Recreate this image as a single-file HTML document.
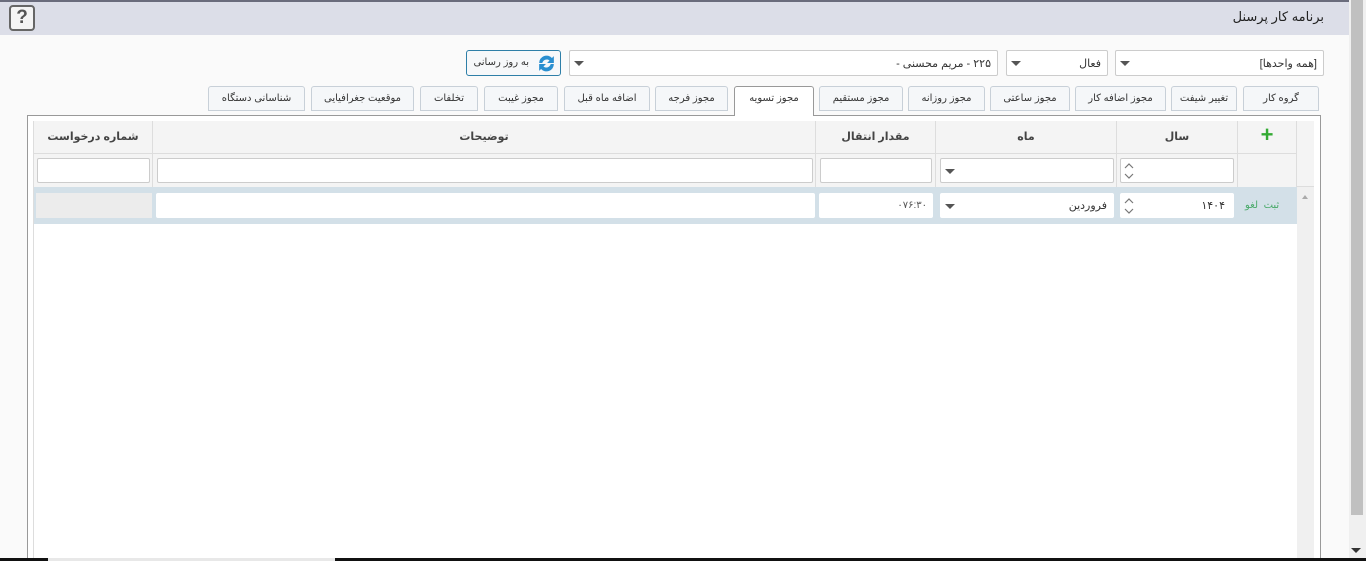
<!DOCTYPE html>
<html><head><meta charset="utf-8"><style>
*{box-sizing:border-box;margin:0;padding:0}
body{width:1366px;height:561px;overflow:hidden;background:#fafafa;font-family:"Liberation Sans","DejaVu Sans",sans-serif;font-size:11px;color:#333;position:relative}
.a{position:absolute}
.hdr{left:0;top:0;width:1349px;height:35px;background:#dcdee8;border-top:2px solid #6a6c7c}
.help{left:9px;top:5px;width:26px;height:26px;border:2px solid #666;border-radius:4px;background:#f4f4f4;font-weight:bold;font-size:19px;text-align:center;line-height:21px;color:#555}
.title{right:42px;top:9px;font-size:13px;color:#222;direction:rtl}
.sb{left:1349px;top:0;width:17px;height:561px;background:#f0f0f0}
.thumb{left:1351px;top:0;width:12px;height:515px;background:#c0c0c0}
.dd{height:26px;border:1px solid #ccc;background:#fff;border-radius:2px;direction:rtl;padding:6px 6px;font-size:11px}
.tri{position:absolute;width:0;height:0;border-left:5px solid transparent;border-right:5px solid transparent;border-top:5px solid #555}
.btn{left:466px;top:50px;width:95px;height:26px;border:1px solid #2e7fa8;border-radius:3px;background:#f6f8fa}
.tab{top:86px;height:25px;border:1px solid #c8d0d8;border-radius:3px 3px 0 0;background:#f5f7f9;font-size:10px;text-align:center;line-height:23px;color:#333;direction:rtl}
.tab.on{background:#fff;border-color:#999;border-bottom:none;height:30px;z-index:2}
.panel{left:27px;top:115px;width:1294px;height:446px;border:1px solid #999;background:#fff}
.grid{left:33px;top:121px;width:1281px;height:440px;border:1px solid #ddd;background:#fff}
.th{top:121px;height:33px;background:#f4f4f4;border-right:1px solid #ddd;border-bottom:1px solid #ddd;font-weight:bold;font-size:11px;text-align:center;line-height:32px;direction:rtl;color:#444}
.fr{top:154px;height:33px;background:#f4f4f4;border-right:1px solid #ddd}
.inp{position:absolute;top:4px;height:25px;background:#fff;border:1px solid #ccc;border-radius:2px}
.row{left:34px;top:187px;width:1263px;height:37px;background:#d3e0e8}
.spin{position:absolute;left:3px;top:3px}
</style></head><body>
<div class="a hdr"></div>
<div class="a help">?</div>
<div class="a title">برنامه کار پرسنل</div>
<div class="a sb"></div><div class="a thumb"></div>
<div class="a" style="left:1351px;top:548px;width:0;height:0;border-left:5px solid transparent;border-right:5px solid transparent;border-top:5px solid #333"></div>

<div class="a dd" style="left:1115px;top:50px;width:209px">[همه واحدها]<span class="tri" style="left:4px;top:10px"></span></div>
<div class="a dd" style="left:1006px;top:50px;width:102px">فعال<span class="tri" style="left:4px;top:10px"></span></div>
<div class="a dd" style="left:569px;top:50px;width:429px">۲۲۵ - مریم محسنی -<span class="tri" style="left:4px;top:10px"></span></div>
<div class="a btn">
<svg class="a" style="left:69px;top:2px" width="21" height="21" viewBox="0 0 20 20"><path d="M3 9.5a7 7 0 0 1 12.2-4.7L17 3v6.5h-6.5l2.4-2.4A4.3 4.3 0 0 0 6 9.5z" fill="#2a8fd0"/><path d="M17 10.5a7 7 0 0 1-12.2 4.7L3 17v-6.5h6.5l-2.4 2.4A4.3 4.3 0 0 0 14 10.5z" fill="#2a8fd0"/></svg>
<span class="a" style="right:31px;top:6px;font-size:10px;direction:rtl">به روز رسانی</span></div>

<div class="a tab" style="left:1243px;width:76px">گروه کار</div>
<div class="a tab" style="left:1171px;width:66px">تغییر شیفت</div>
<div class="a tab" style="left:1075px;width:91px">مجوز اضافه کار</div>
<div class="a tab" style="left:990px;width:80px">مجوز ساعتی</div>
<div class="a tab" style="left:908px;width:77px">مجوز روزانه</div>
<div class="a tab" style="left:819px;width:84px">مجوز مستقیم</div>
<div class="a tab on" style="left:734px;width:80px">مجوز تسویه</div>
<div class="a tab" style="left:655px;width:73px">مجوز فرجه</div>
<div class="a tab" style="left:564px;width:86px">اضافه ماه قبل</div>
<div class="a tab" style="left:484px;width:74px">مجوز غیبت</div>
<div class="a tab" style="left:420px;width:58px">تخلفات</div>
<div class="a tab" style="left:311px;width:103px">موقعیت جغرافیایی</div>
<div class="a tab" style="left:208px;width:97px">شناسانی دستگاه</div>

<div class="a panel"></div>
<div class="a grid"></div>
<div class="a" style="left:1297px;top:187px;width:17px;height:374px;background:#f0f0f0"></div>
<div class="a" style="left:1302px;top:195px;border-left:3px solid transparent;border-right:3px solid transparent;border-bottom:4px solid #aaa"></div>

<div class="a th" style="left:1238px;width:59px;color:#3a3;font-size:22px;line-height:28px">+</div>
<div class="a th" style="left:1117px;width:121px">سال</div>
<div class="a th" style="left:936px;width:181px">ماه</div>
<div class="a th" style="left:816px;width:120px">مقدار انتقال</div>
<div class="a th" style="left:153px;width:663px">توضیحات</div>
<div class="a th" style="left:34px;width:119px">شماره درخواست</div>
<div class="a" style="left:1297px;top:121px;width:17px;height:66px;background:#f4f4f4;border-bottom:1px solid #ddd"></div>

<div class="a fr" style="left:1238px;width:59px"></div>
<div class="a fr" style="left:1117px;width:121px"><div class="inp" style="left:3px;width:114px"><svg class="spin" width="10" height="18" viewBox="0 0 10 18"><path d="M1 6l4-4 4 4M1 12l4 4 4-4" fill="none" stroke="#777" stroke-width="1.2"/></svg></div></div>
<div class="a fr" style="left:936px;width:181px"><div class="inp" style="left:4px;width:174px"><span class="tri" style="left:4px;top:10px"></span></div></div>
<div class="a fr" style="left:816px;width:120px"><div class="inp" style="left:4px;width:112px"></div></div>
<div class="a fr" style="left:153px;width:663px"><div class="inp" style="left:4px;width:656px"></div></div>
<div class="a fr" style="left:34px;width:119px"><div class="inp" style="left:3px;width:113px"></div></div>

<div class="a row"></div>
<div class="a" style="left:1245px;top:200px;color:#4aaa6a;font-size:10px;direction:rtl">ثبت&nbsp; لغو</div>
<div class="a inp" style="left:1120px;top:193px;width:114px;border-color:#fff"><svg class="spin" width="10" height="18" viewBox="0 0 10 18"><path d="M1 6l4-4 4 4M1 12l4 4 4-4" fill="none" stroke="#777" stroke-width="1.2"/></svg><span class="a" style="right:8px;top:5px;font-size:11px">۱۴۰۴</span></div>
<div class="a inp" style="left:940px;top:193px;width:174px;border-color:#fff"><span class="tri" style="left:4px;top:10px"></span><span class="a" style="right:6px;top:5px;font-size:11px">فروردین</span></div>
<div class="a inp" style="left:819px;top:193px;width:114px;border-color:#fff"><span class="a" style="right:5px;top:6px;font-size:10px;color:#555">۰۷۶:۳۰</span></div>
<div class="a inp" style="left:156px;top:193px;width:659px;border-color:#fff"></div>
<div class="a" style="left:36px;top:193px;width:116px;height:25px;background:#ececec"></div>

<div class="a" style="left:0;top:558px;width:1366px;height:3px;background:#111"></div>
<div class="a" style="left:48px;top:558px;width:287px;height:3px;background:#e8e8e8"></div>
</body></html>
